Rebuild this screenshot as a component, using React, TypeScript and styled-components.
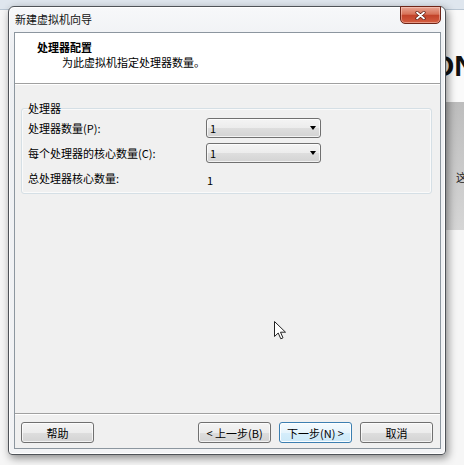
import React from "react";
import styled, { createGlobalStyle } from "styled-components";

const GlobalStyle = createGlobalStyle`
  html, body { margin: 0; padding: 0; }
  body {
    font-family: "Noto Sans CJK SC", "Noto Sans", sans-serif;
    font-size: 11px;
    color: #000;
    background: #f7f7f7;
  }
`;

const Page = styled.div`
  position: relative;
  width: 464px;
  height: 465px;
  overflow: hidden;
  box-sizing: border-box;
  padding: 6px 0 0 8px;
  background: linear-gradient(to bottom, #dfe6ee 0, #dfe6ee 9px, #b9c6d3 9px, #b9c6d3 10px, #f6f6f6 10px, #f6f6f6 100%);
`;

const BackWindow = styled.div`
  position: absolute;
  left: 400px;
  top: 10px;
  width: 80px;
  height: 220px;
  box-sizing: border-box;
  padding: 41px 0 0 31px;
  background: linear-gradient(to bottom, #fafafa 0, #fafafa 92px, #bdbdbd 92px, #d6d6d6 220px);
`;

const BackHeading = styled.div`
  font-family: "Liberation Sans", Arial, sans-serif;
  font-weight: 700;
  font-size: 30px;
  line-height: 30px;
  white-space: nowrap;
  color: #111;
`;

const BackText = styled.div`
  margin: 89px 0 0 25px;
  font-size: 11px;
  line-height: 14px;
  color: #222;
`;

const Dialog = styled.div`
  position: relative;
  z-index: 1;
  width: 438px;
  height: 449px;
  box-sizing: border-box;
  border: 1px solid #4f5358;
  border-radius: 6px 6px 4px 4px;
  background: linear-gradient(to bottom, #f7f8fa, #eef0f3 40px, #f2f3f5);
  box-shadow: 2px 3px 9px rgba(0, 0, 0, 0.45), inset 0 0 0 1px #ffffff;
  display: flex;
  flex-direction: column;
`;

const TitleBar = styled.div`
  height: 25px;
  display: flex;
  align-items: flex-start;
  padding-left: 6px;
`;

const TitleText = styled.div`
  flex: 1;
  line-height: 14px;
  margin-top: 5px;
  color: #111;
`;

const CloseButton = styled.div`
  width: 39px;
  height: 16px;
  margin-right: 4px;
  margin-top: -1px;
  border: 1px solid #6e2518;
  border-radius: 0 0 5px 5px;
  background: linear-gradient(to bottom, #e9a593 0%, #d77258 45%, #c2432a 52%, #d45d40 100%);
  box-shadow: inset 0 0 0 1px rgba(255, 220, 210, 0.45);
  display: flex;
  align-items: center;
  justify-content: center;
`;

const Panel = styled.div`
  flex: 1;
  margin: 0 4px 5px 5px;
  border: 1px solid #8c969f;
  background: #f0f0f0;
  display: flex;
  flex-direction: column;
`;

const Header = styled.div`
  height: 43px;
  background: #ffffff;
  border-bottom: 1px solid #a0a0a0;
  box-shadow: 0 1px 0 #ffffff;
  padding: 7px 0 0 22px;
  box-sizing: content-box;
`;

const HeaderTitle = styled.div`
  font-weight: 700;
  line-height: 15px;
`;

const HeaderSub = styled.div`
  line-height: 14px;
  margin-left: 25px;
`;

const Body = styled.div`
  flex: 1;
  padding: 17px 8px 0 6px;
`;

const GroupBox = styled.fieldset`
  margin: 0;
  padding: 3px 6px 5px 6px;
  border: 1px solid #d5dfe5;
  border-radius: 3px;
  box-shadow: inset 0 0 0 1px #fafafa;
`;

const GroupLegend = styled.legend`
  padding: 0;
  line-height: 14px;
`;

const FormGrid = styled.div`
  display: grid;
  grid-template-columns: 178px 115px;
  grid-auto-rows: 20px;
  row-gap: 5px;
  align-items: center;
`;

const FieldLabel = styled.div`
  line-height: 14px;
`;

const Combo = styled.div`
  height: 20px;
  box-sizing: border-box;
  border: 1px solid #707070;
  border-radius: 3px;
  background: linear-gradient(to bottom, #f4f4f4 0%, #ececec 50%, #dedede 50%, #d3d3d3 100%);
  box-shadow: inset 0 0 0 1px rgba(255, 255, 255, 0.7);
  display: flex;
  align-items: center;
  padding: 0 4px 0 3px;
`;

const ComboValue = styled.span`
  flex: 1;
  line-height: 14px;
`;

const ComboArrow = styled.span`
  width: 0;
  height: 0;
  border-left: 3px solid transparent;
  border-right: 3px solid transparent;
  border-top: 4px solid #000;
`;

const ValueText = styled.div`
  line-height: 14px;
  padding-left: 1px;
  margin-top: 3px;
`;

const Footer = styled.div`
  border-top: 1px solid #a0a0a0;
  box-shadow: inset 0 1px 0 #ffffff;
  padding: 8px 7px 5px 6px;
  display: flex;
  align-items: center;
`;

const ButtonGroup = styled.div`
  margin-left: auto;
  display: flex;
  gap: 8px;
`;

const Button = styled.div<{ $primary?: boolean }>`
  width: 73px;
  height: 21px;
  box-sizing: border-box;
  border: 1px solid ${(p) => (p.$primary ? "#3c7fb1" : "#707070")};
  border-radius: 3px;
  background: ${(p) =>
    p.$primary
      ? "linear-gradient(to bottom, #f5fbfe 0%, #e6f4fc 50%, #d6eefb 50%, #cbe8f8 100%)"
      : "linear-gradient(to bottom, #f4f4f4 0%, #ececec 50%, #dedede 50%, #d3d3d3 100%)"};
  box-shadow: inset 0 0 0 1px ${(p) => (p.$primary ? "rgba(255,255,255,0.9)" : "rgba(255,255,255,0.7)")};
  display: flex;
  align-items: center;
  justify-content: center;
  line-height: 14px;
  white-space: nowrap;
`;

const Cursor = styled.svg`
  position: absolute;
  left: 274px;
  top: 321px;
  z-index: 2;
`;

export default function App() {
  return (
    <>
      <GlobalStyle />
      <Page>
        <BackWindow>
          <BackHeading>ON</BackHeading>
          <BackText>这</BackText>
        </BackWindow>
        <Dialog>
          <TitleBar>
            <TitleText>新建虚拟机向导</TitleText>
            <CloseButton>
              <svg width="11" height="9" viewBox="0 0 11 9">
                <path d="M2 1.5 L9 7.5 M9 1.5 L2 7.5" stroke="#5a1c12" strokeWidth="3.2" strokeLinecap="round" />
                <path d="M2 1.5 L9 7.5 M9 1.5 L2 7.5" stroke="#ffffff" strokeWidth="1.8" strokeLinecap="round" />
              </svg>
            </CloseButton>
          </TitleBar>
          <Panel>
            <Header>
              <HeaderTitle>处理器配置</HeaderTitle>
              <HeaderSub>为此虚拟机指定处理器数量。</HeaderSub>
            </Header>
            <Body>
              <GroupBox>
                <GroupLegend>处理器</GroupLegend>
                <FormGrid>
                  <FieldLabel>处理器数量(P):</FieldLabel>
                  <Combo>
                    <ComboValue>1</ComboValue>
                    <ComboArrow />
                  </Combo>
                  <FieldLabel>每个处理器的核心数量(C):</FieldLabel>
                  <Combo>
                    <ComboValue>1</ComboValue>
                    <ComboArrow />
                  </Combo>
                  <FieldLabel>总处理器核心数量:</FieldLabel>
                  <ValueText>1</ValueText>
                </FormGrid>
              </GroupBox>
            </Body>
            <Footer>
              <Button>帮助</Button>
              <ButtonGroup>
                <Button>&lt; 上一步(B)</Button>
                <Button $primary>下一步(N) &gt;</Button>
                <Button>取消</Button>
              </ButtonGroup>
            </Footer>
          </Panel>
        </Dialog>
        <Cursor width="13" height="19" viewBox="0 0 13 19">
          <path d="M0.5 0.5 L0.5 15.5 L4.2 12 L6.8 17.8 L9 16.8 L6.5 11.2 L11.5 11.2 Z" fill="#ffffff" stroke="#222" strokeWidth="1" strokeLinejoin="round" />
        </Cursor>
      </Page>
    </>
  );
}
